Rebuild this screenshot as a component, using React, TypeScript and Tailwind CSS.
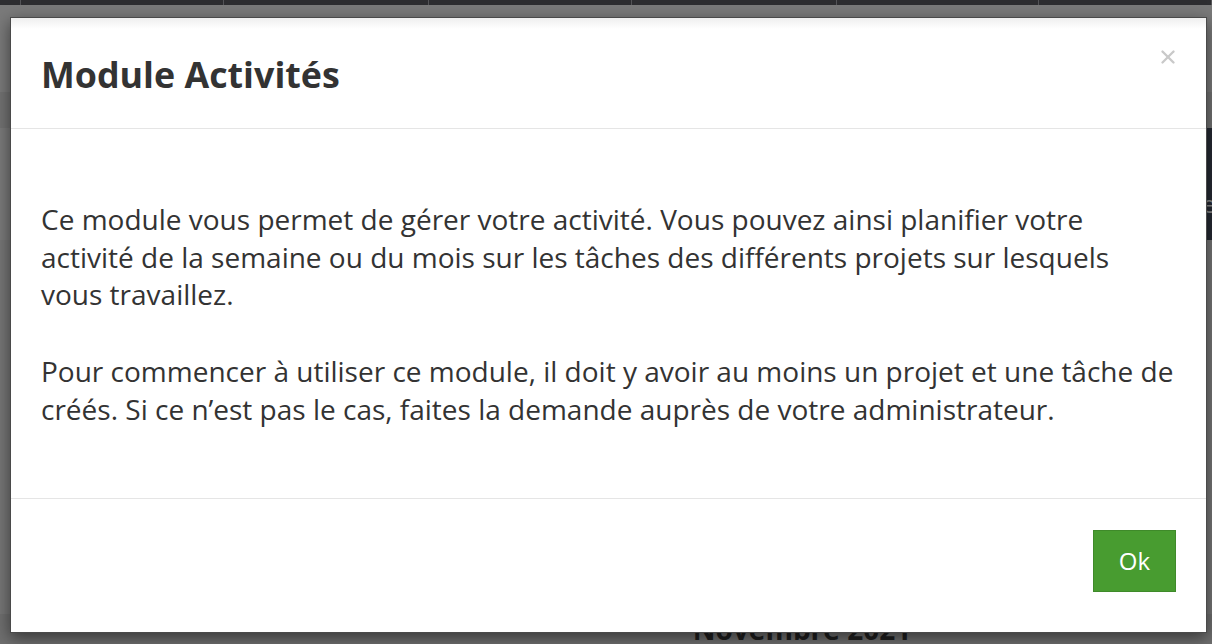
import { X } from "lucide-react"

const topCells = [21, 203, 205, 203, 205, 202, 173]

function BackgroundPage() {
  return (
    <div className="flex h-[644px] flex-col bg-[#777777] font-['Open_Sans',sans-serif]">
      <div className="flex h-[5px] bg-[#2e2e31]">
        {topCells.map((w, i) => (
          <div key={i} className="h-full border-r border-[#555558]" style={{ width: w }} />
        ))}
      </div>
      <div className="h-[87px] bg-[#7a7a7a]" />
      <div className="flex h-[36px] justify-end bg-[#727272]" />
      <div className="flex h-[112px] items-center justify-end bg-[#7a7a7a]">
        <div className="flex h-full w-[60px] items-center bg-[#262a33] pl-[11px] pt-[40px] text-[24px] text-[#8a8a8a]">
          <span>Date</span>
        </div>
      </div>
      <div className="flex-1 bg-[#767676]" />
      <div className="flex h-[30px] justify-center bg-[#6f6f6f] pl-[392px]">
        <span className="text-[28px] leading-[30px] font-bold text-[#1f1f1f]">Novembre 2021</span>
      </div>
    </div>
  )
}

export default function App() {
  return (
    <div className="relative h-[644px] w-[1212px] overflow-hidden">
      <BackgroundPage />
      <div className="absolute left-[10px] top-[17px] flex h-[616px] w-[1197px] flex-col border border-[#4a4a4a] bg-white font-['Open_Sans',sans-serif] text-[#333] shadow-[0_5px_15px_rgba(0,0,0,0.5)]">
        <div className="flex h-[111px] shrink-0 justify-between border-b border-[#e5e5e5] bg-gradient-to-b from-[#efefef] via-white to-white bg-[length:100%_22px] bg-no-repeat pl-[30px] pr-[27px]">
          <h4 className="self-center pt-[2px] text-[35.8px] leading-[40px] font-bold text-[#333]">Module Activités</h4>
          <button className="mt-[28px] self-start text-[#c9c9c9]">
            <X size={22} strokeWidth={2.6} />
          </button>
        </div>
        <div className="flex h-[370px] shrink-0 flex-col justify-center border-b border-[#e5e5e5] px-[30px] pt-[2px] text-[28px] leading-[37.5px]">
          <p className="mb-[39.5px]">
            Ce module vous permet de gérer votre activité. Vous pouvez ainsi planifier votre
            <br />
            activité de la semaine ou du mois sur les tâches des différents projets sur lesquels
            <br />
            vous travaillez.
          </p>
          <p>
            Pour commencer à utiliser ce module, il doit y avoir au moins un projet et une tâche de
            <br />
            créés. Si ce n’est pas le cas, faites la demande auprès de votre administrateur.
          </p>
        </div>
        <div className="flex flex-1 items-start justify-end pr-[30px] pt-[31px]">
          <button className="flex h-[62px] w-[83px] items-center justify-center border border-[#3f8a2a] bg-[#489c30] text-[24px] text-white">
            Ok
          </button>
        </div>
      </div>
    </div>
  )
}
